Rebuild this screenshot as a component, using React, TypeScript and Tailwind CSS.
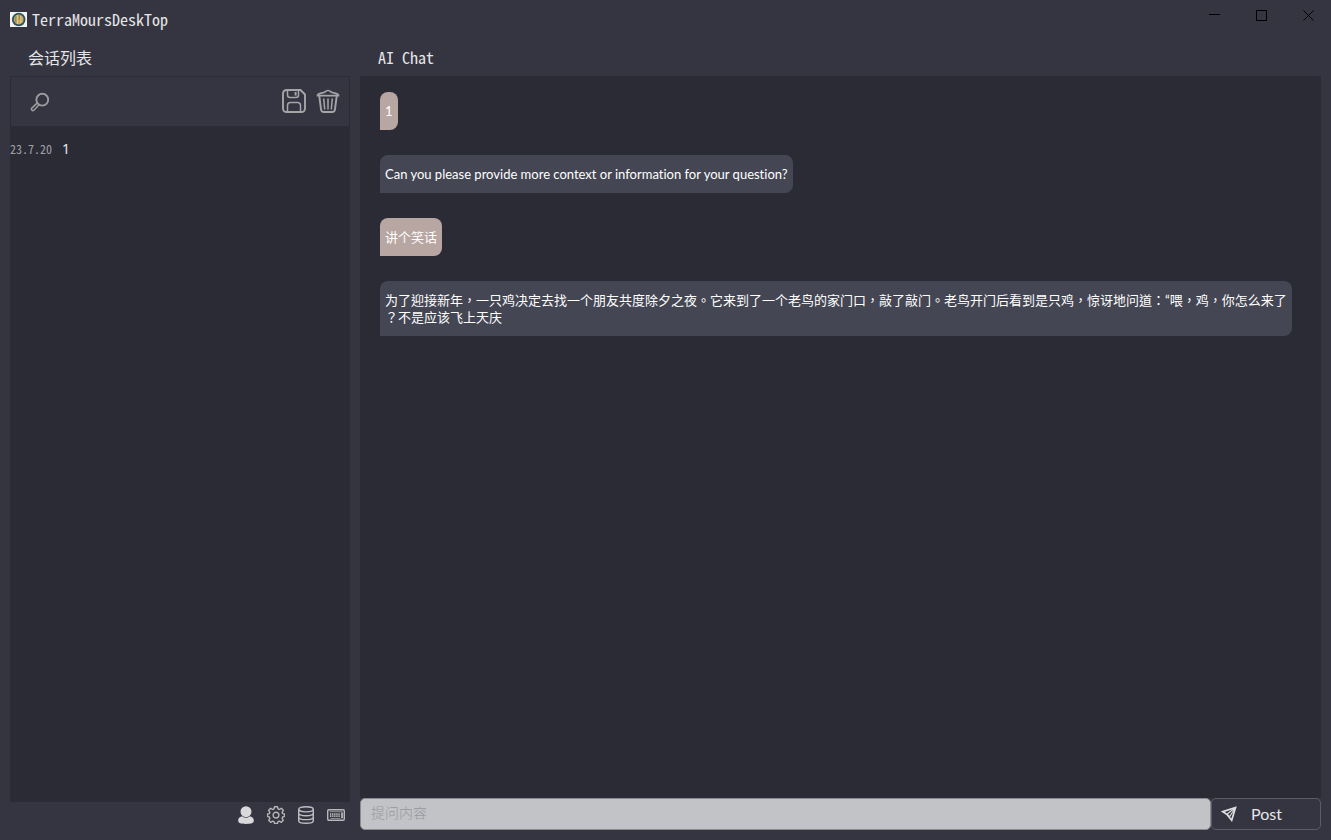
import { useState } from 'react'
import type { FormEvent, ReactNode } from 'react'

// ---------------------------------------------------------------------------
// Data
// ---------------------------------------------------------------------------

interface Message {
  id: number
  role: 'user' | 'assistant'
  content: string
}

const sessions = [{ id: 1, date: '23.7.20', title: '1' }]

const initialMessages: Message[] = [
  { id: 1, role: 'user', content: '1' },
  {
    id: 2,
    role: 'assistant',
    content: 'Can you please provide more context or information for your question?',
  },
  { id: 3, role: 'user', content: '讲个笑话' },
  {
    id: 4,
    role: 'assistant',
    content:
      '为了迎接新年，一只鸡决定去找一个朋友共度除夕之夜。它来到了一个老鸟的家门口，敲了敲门。老鸟开门后看到是只鸡，惊讶地问道：“喂，鸡，你怎么来了？不是应该飞上天庆',
  },
]

// ---------------------------------------------------------------------------
// Icons
// ---------------------------------------------------------------------------

function LogoIcon() {
  return (
    <svg viewBox="0 0 17 15" className="h-[15px] w-[17px]" aria-hidden="true">
      <rect width="17" height="15" fill="#f4f5f3" />
      <circle cx="8.7" cy="7.5" r="6.8" fill="#2c5263" />
      <circle cx="8.7" cy="7.5" r="4.9" fill="#cfa860" />
      <path d="M7.600 3v9M10.800 4v7" stroke="#e6cc8e" strokeWidth="1" />
      <path d="M5.800 4.500v6M9.300 3v5" stroke="#6d8a55" strokeWidth="1" />
    </svg>
  )
}

function SearchIcon() {
  return (
    <svg viewBox="0 0 20 20" className="size-5" fill="none" stroke="#9b9ba0" aria-hidden="true">
      <circle cx="12.3" cy="7.7" r="5.900" strokeWidth="1.900" />
      <path d="m7.600 10.600-5.800 5.500c-1.200 1.400.7 3.300 2.100 2.100l5.500-5.800" strokeWidth="1.500" />
    </svg>
  )
}

function SaveIcon() {
  return (
    <svg viewBox="0 0 24 24" className="size-6" fill="none" stroke="#a5a5a9" aria-hidden="true">
      <path d="M4.500 1h14L23 5.500v14a3.500 3.500 0 0 1-3.500 3.500h-15A3.500 3.500 0 0 1 1 19.500v-15A3.500 3.500 0 0 1 4.500 1Z" strokeWidth="1.900" />
      <path d="M5.500 1.500v4.500a2.500 2.500 0 0 0 2.500 2.500h6a2.500 2.500 0 0 0 2.500-2.500V1.500M5.500 22.500v-6a3 3 0 0 1 3-3h7a3 3 0 0 1 3 3v6" strokeWidth="1.500" />
      <path d="M13.600 3v3.500" strokeWidth="2" />
    </svg>
  )
}

function TrashIcon() {
  return (
    <svg viewBox="0 0 24 24" className="size-6" fill="none" stroke="#a5a5a9" aria-hidden="true">
      <path d="M3.300 7.200 5 20.200A3 3 0 0 0 8 23h8a3 3 0 0 0 3-2.800L20.700 7.200" strokeWidth="1.900" />
      <path d="M1.500 6.700c0-1.300 1.300-2 2.800-2.300l4.300-1.200c1-.8 2-1.700 3.400-1.700s2.400.9 3.400 1.700l4.300 1.200c1.500.3 2.800 1 2.800 2.300Z" strokeWidth="1.700" />
      <path d="m7.700 9.500 1 11M12 9.500v11M16.300 9.500l-1 11" strokeWidth="1.500" />
    </svg>
  )
}

function UserIcon() {
  return (
    <svg viewBox="0 0 18 18" className="size-[18px]" fill="#d9d9dc" aria-hidden="true">
      <circle cx="9" cy="5.700" r="5.500" />
      <path d="M5 10.300C2.500 10.900 1.200 12.500 1.200 14.600 1.200 17.200 3.500 18 9 18s7.800-.8 7.800-3.400c0-2.100-1.300-3.700-3.800-4.300-1 .9-2.300 1.500-4 1.500s-3-.6-4-1.500Z" />
    </svg>
  )
}

function GearIcon() {
  return (
    <svg viewBox="0 0 18 18" className="size-[18px]" fill="none" stroke="#b5b5ba" strokeWidth="1.400" strokeLinejoin="round" aria-hidden="true">
      <path d="M7.500.8h3l.5 2.100 1.300.6 2-1.200 2 2-1.200 2 .6 1.300 1.800.4v2.400l-1.800.6-.6 1.300 1.200 2-2 2-2-1.200-1.300.6-.5 1.700h-3l-.5-1.700-1.300-.6-2 1.200-2-2 1.200-2-.6-1.300-1.800-.6V8l1.800-.4.6-1.300-1.200-2 2-2 2 1.200L7 2.900Z" />
      <circle cx="9" cy="9.100" r="2.900" />
    </svg>
  )
}

function DatabaseIcon() {
  return (
    <svg viewBox="0 0 18 18" className="size-[18px]" fill="none" stroke="#bdbdc1" strokeWidth="1.400" aria-hidden="true">
      <ellipse cx="9" cy="3.300" rx="7.300" ry="2.600" />
      <path d="M1.700 3.300v11.400c0 1.500 3.300 2.600 7.300 2.600s7.300-1.100 7.300-2.600V3.300M1.700 7.100c0 1.500 3.300 2.700 7.300 2.700s7.300-1.200 7.300-2.700M1.700 10.900c0 1.500 3.300 2.700 7.300 2.700s7.300-1.200 7.300-2.700" />
    </svg>
  )
}

function KeyboardIcon() {
  return (
    <svg viewBox="0 0 18 18" className="size-[18px]" fill="none" stroke="#b8b8bc" aria-hidden="true">
      <rect x=".7" y="3.700" width="16.600" height="10.600" rx="1.200" strokeWidth="1.400" />
      <path d="M2.500 5.700h13" strokeWidth="1" stroke="#8f8f95" />
      <path d="M3 8.200h10.500M3 10.200h10.500" strokeWidth="1.700" strokeDasharray="1.300 .8" />
      <path d="M3.500 12.400h10" strokeWidth="1" stroke="#8f8f95" />
      <path d="M15 6.500v5.800" strokeWidth="1.800" />
    </svg>
  )
}

function SendIcon() {
  return (
    <svg viewBox="0 0 16 16" className="size-4" fill="none" stroke="#dededf" strokeWidth="1.700" aria-hidden="true">
      <path d="M14.500 1.500 1.800 5.600l4 2.700 4.900 6Z" />
      <path d="M14.500 1.500 5.800 8.300l2.900 2.200Z" strokeWidth="1.100" />
    </svg>
  )
}

// ---------------------------------------------------------------------------
// Pieces
// ---------------------------------------------------------------------------

function IconButton({ label, children }: { label: string; children: ReactNode }) {
  return (
    <button type="button" aria-label={label} className="flex items-center justify-center hover:opacity-80">
      {children}
    </button>
  )
}

function WindowButton({ label, children }: { label: string; children: ReactNode }) {
  return (
    <button type="button" aria-label={label} className="flex h-[31px] w-[47px] items-center justify-center pl-0.5 hover:bg-white/10">
      <svg viewBox="0 0 11 11" className="size-[11px]" fill="none" stroke="#000" aria-hidden="true">
        {children}
      </svg>
    </button>
  )
}

function TitleBar() {
  return (
    <header className="flex h-10 shrink-0 items-start justify-between pl-2.5">
      <div className="flex h-10 items-center gap-[5px] pb-0.5">
        <LogoIcon />
        <h1 className="text-base">TerraMoursDeskTop</h1>
      </div>
      <div className="flex">
        <WindowButton label="Minimize">
          <path d="M0 4.500h11" />
        </WindowButton>
        <WindowButton label="Maximize">
          <rect x=".5" y=".5" width="10" height="10" />
        </WindowButton>
        <WindowButton label="Close">
          <path d="m.5.5 10 10M10.500.5l-10 10" />
        </WindowButton>
      </div>
    </header>
  )
}

function Bubble({ message }: { message: Message }) {
  const color = message.role === 'user' ? 'bg-[#b8a6a2]' : 'bg-[#444653]'
  return (
    <li
      lang="zh-TW"
      className={`w-fit rounded-lg rounded-bl-none px-[5px] pt-[11px] pb-2.5 font-['Lato','Noto_Sans_CJK_TC',sans-serif] text-[13px] leading-[17px] text-white [font-variant-ligatures:none] [line-break:anywhere] ${color}`}
    >
      {message.content}
    </li>
  )
}

// ---------------------------------------------------------------------------
// Page
// ---------------------------------------------------------------------------

export default function App() {
  const [messages, setMessages] = useState(initialMessages)
  const [draft, setDraft] = useState('')

  const handlePost = (e: FormEvent) => {
    e.preventDefault()
    if (!draft.trim()) return
    setMessages([...messages, { id: messages.length + 1, role: 'user', content: draft }])
    setDraft('')
  }

  return (
    <div className="flex h-screen flex-col bg-[#353541] font-['Noto_Sans_Mono_CJK_SC','Liberation_Mono','Noto_Sans_CJK_SC',monospace] text-[#e6e6e8]">
      <TitleBar />
      <div className="flex min-h-0 flex-1 gap-2.5 px-2.5">
        <aside className="flex w-[340px] shrink-0 flex-col">
          <h2 className="flex h-9 shrink-0 items-center px-[18px] pb-0.5 text-base">会话列表</h2>
          <div className="flex min-h-0 flex-1 flex-col bg-[#2b2b36]">
            <div className="flex h-[51px] shrink-0 items-center justify-between border border-[#2b2b36] bg-[#353541] pr-[9px] pl-[19px]">
              <IconButton label="Search">
                <SearchIcon />
              </IconButton>
              <div className="flex gap-2.5 pb-0.5">
                <IconButton label="Save">
                  <SaveIcon />
                </IconButton>
                <IconButton label="Delete">
                  <TrashIcon />
                </IconButton>
              </div>
            </div>
            <ul className="overflow-y-auto pt-[11px]">
              {sessions.map((s) => (
                <li key={s.id}>
                  <button type="button" className="flex w-full items-center gap-2.5 text-left">
                    <span className="text-xs leading-[22px] text-[#a0a0a5]">{s.date}</span>
                    <span className="font-['Noto_Sans',sans-serif] text-sm leading-[22px]">{s.title}</span>
                  </button>
                </li>
              ))}
            </ul>
          </div>
          <div className="flex h-[38px] shrink-0 items-start justify-end gap-3 pt-1 pr-[5px]">
            <IconButton label="Account">
              <UserIcon />
            </IconButton>
            <IconButton label="Settings">
              <GearIcon />
            </IconButton>
            <IconButton label="Database">
              <DatabaseIcon />
            </IconButton>
            <IconButton label="Shortcuts">
              <KeyboardIcon />
            </IconButton>
          </div>
        </aside>

        <main className="flex min-w-0 flex-1 flex-col pb-2.5">
          <h2 className="flex h-9 shrink-0 items-center px-[18px] pb-0.5 text-base">AI Chat</h2>
          <ul className="flex min-h-0 flex-1 flex-col gap-[25px] overflow-y-auto bg-[#2b2b36] pt-4 pr-[29px] pl-5">
            {messages.map((m) => (
              <Bubble key={m.id} message={m} />
            ))}
          </ul>
          <form onSubmit={handlePost} className="flex h-8 shrink-0 font-['Lato','Noto_Sans_CJK_SC',sans-serif]">
            <input
              type="text"
              aria-label="提问内容"
              placeholder="提问内容"
              value={draft}
              onChange={(e) => setDraft(e.target.value)}
              className="min-w-0 flex-1 rounded-[5px] border border-[#8a8a90] bg-[#c2c3c7] px-2.5 pb-0.5 text-sm text-[#2b2b36] outline-none placeholder:font-light placeholder:text-[#98989c]"
            />
            <button
              type="submit"
              className="flex w-[110px] items-center gap-3.5 rounded-[5px] border border-[#5c5b68] px-[9px] text-base hover:bg-white/5"
            >
              <SendIcon />
              Post
            </button>
          </form>
        </main>
      </div>
    </div>
  )
}
